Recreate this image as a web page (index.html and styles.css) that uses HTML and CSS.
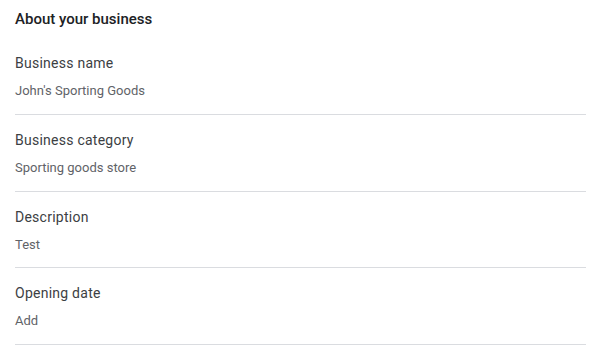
FILE: index.html
```html
<!DOCTYPE html>
<html>
<head>
<meta charset="utf-8">
<link rel="stylesheet" href="styles.css">
</head>
<body>
<div class="panel">
  <div class="title">About your business</div>
  <div class="row">
    <div class="label">Business name</div>
    <div class="value">John's Sporting Goods</div>
  </div>
  <div class="row">
    <div class="label">Business category</div>
    <div class="value">Sporting goods store</div>
  </div>
  <div class="row">
    <div class="label">Description</div>
    <div class="value">Test</div>
  </div>
  <div class="row">
    <div class="label">Opening date</div>
    <div class="value">Add</div>
  </div>
</div>
</body>
</html>
```
FILE: styles.css
```css
html, body {
  margin: 0;
  padding: 0;
  background: #ffffff;
}
.panel {
  padding: 9px 20px 0 15px;
  font-family: Roboto, "Liberation Sans", sans-serif;
}
.title {
  font-size: 15px;
  font-weight: 500;
  line-height: 20px;
  color: #202124;
  margin-bottom: 9.333px;
}
.row {
  padding: 15px 0 12.667px;
  border-bottom: 1px solid #dadce0;
}
.label {
  font-size: 14px;
  letter-spacing: 0.25px;
  line-height: 20px;
  color: #3c4043;
}
.value {
  margin-top: 8px;
  font-size: 13px;
  line-height: 20px;
  color: #5f6368;
}
```
